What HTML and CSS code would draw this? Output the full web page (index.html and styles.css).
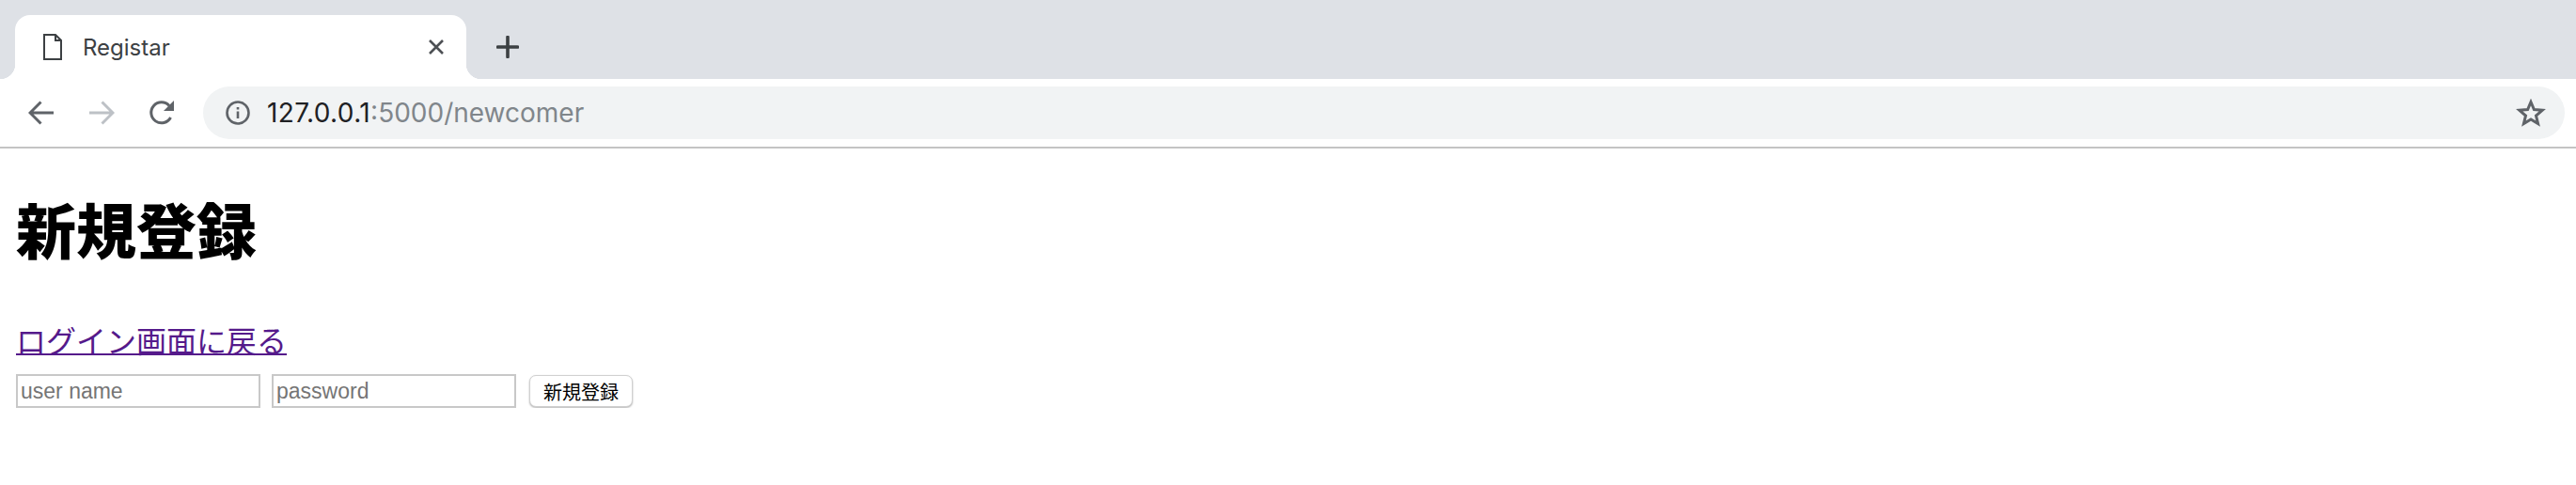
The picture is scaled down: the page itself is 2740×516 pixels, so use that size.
FILE: index.html
```html
<!DOCTYPE html>
<html lang="ja">
<head>
    <meta charset="UTF-8">
    <title>Registar</title>
    <link rel="stylesheet" href="styles.css">
</head>
<body>
    <div class="tabstrip">
        <div class="tab">
            <svg class="tab-icon" width="20" height="28" viewBox="0 0 20 28"><path d="M1 1H13L19 7V27H1Z M13 1V7H19" fill="none" stroke="#3c4043" stroke-width="2"/></svg>
            <span class="tab-title">Registar</span>
            <svg class="tab-close" width="18" height="18" viewBox="0 0 18 18"><path d="M2 2L16 16M16 2L2 16" stroke="#4d5054" stroke-width="2.6"/></svg>
        </div>
        <svg class="new-tab" width="24" height="24" viewBox="0 0 24 24"><path d="M12 1.5V22.5M1.5 12H22.5" stroke="#3c4043" stroke-width="3.6" stroke-linecap="round"/></svg>
    </div>
    <div class="toolbar">
        <svg class="nav-icon" width="28" height="28" viewBox="0 0 28 28"><path d="M27 14H3M13.5 2.5L2 14L13.5 25.5" fill="none" stroke="#5f6368" stroke-width="3"/></svg>
        <svg class="nav-icon" width="28" height="28" viewBox="0 0 28 28"><path d="M1 14H25M14.5 2.5L26 14L14.5 25.5" fill="none" stroke="#bdc1c6" stroke-width="3"/></svg>
        <svg class="nav-icon" width="28" height="28" viewBox="0 0 28 28"><path d="M23.5 19A11 11 0 1 1 22 6.5" fill="none" stroke="#5f6368" stroke-width="3"/><path d="M27 1V12H16Z" fill="#5f6368"/></svg>
        <div class="omnibox">
            <svg class="info-icon" width="26" height="26" viewBox="0 0 26 26"><circle cx="13" cy="13" r="11.5" fill="none" stroke="#5f6368" stroke-width="2.6"/><path d="M13 11.5V19M13 7V9.4" stroke="#5f6368" stroke-width="2.6"/></svg>
            <span class="url"><span class="host">127.0.0.1</span>:5000/newcomer</span>
            <svg class="star-icon" width="32" height="30" viewBox="0 0 32 30"><path d="M16 3.5L19.4 11.6L28.2 12.3L21.5 18L23.6 26.6L16 22L8.4 26.6L10.5 18L3.8 12.3L12.6 11.6Z" fill="none" stroke="#5f6368" stroke-width="3"/></svg>
        </div>
    </div>
    <div class="content">
        <h1>新規登録</h1>
        <a class="back-link" href="#">ログイン画面に戻る</a>
        <form class="newcomer-form">
            <input type="text" placeholder="user name">
            <input type="password" placeholder="password">
            <button type="button">新規登録</button>
        </form>
    </div>
</body>
</html>
```

FILE: styles.css
```css
body {
    margin: 0;
    background: #fff;
    color: #000;
    font-family: "Liberation Sans", "Noto Sans CJK JP", sans-serif;
}

.tabstrip {
    height: 84px;
    background: #dee1e6;
    display: flex;
    align-items: flex-end;
    padding-left: 16px;
    box-sizing: border-box;
}

.tab {
    position: relative;
    width: 480px;
    height: 68px;
    box-sizing: border-box;
    padding: 0 23px 0 30px;
    background: #fff;
    border-radius: 16px 16px 0 0;
    display: flex;
    align-items: center;
}

.tab::before,
.tab::after {
    content: "";
    position: absolute;
    bottom: 0;
    width: 16px;
    height: 16px;
}

.tab::before {
    left: -16px;
    background: radial-gradient(circle at 0 0, #dee1e6 16px, #fff 16.5px);
}

.tab::after {
    right: -16px;
    background: radial-gradient(circle at 100% 0, #dee1e6 16px, #fff 16.5px);
}

.tab-title {
    margin-left: 22px;
    flex: 1;
    font-family: Inter, sans-serif;
    font-size: 24px;
    color: #3c4043;
}

.new-tab {
    margin: 0 0 22px 32px;
}

.toolbar {
    height: 72px;
    border-bottom: 2px solid #c4c4c4;
    display: flex;
    align-items: center;
    padding: 0 12px 0 30px;
    gap: 36px;
}

.omnibox {
    flex: 1;
    height: 56px;
    margin-left: -6px;
    padding: 0 20px 0 24px;
    border-radius: 28px;
    background: #f1f3f4;
    display: flex;
    align-items: center;
}

.url {
    margin-left: 18px;
    flex: 1;
    font-family: Inter, sans-serif;
    font-size: 28px;
    color: #80868b;
}

.host {
    color: #202124;
    letter-spacing: 0.4px;
}

.content {
    padding: 0 17px;
}

h1 {
    margin: 0;
    padding-top: 53px;
    font-size: 64px;
    line-height: 74px;
    font-weight: 900;
}

.back-link {
    display: block;
    width: max-content;
    margin-top: 61px;
    font-size: 32px;
    line-height: 37px;
    color: #551a8b;
    text-decoration-thickness: 2px;
}

.newcomer-form {
    margin-top: 15px;
    display: flex;
    align-items: center;
}

input {
    width: 260px;
    height: 36px;
    box-sizing: border-box;
    margin-right: 12px;
    padding: 0 3px;
    border: 2px solid #c8c8c8;
    font-family: "Liberation Sans", sans-serif;
    font-size: 23px;
}

input::placeholder {
    color: #757575;
}

button {
    width: 110px;
    height: 34px;
    margin-left: 2px;
    padding: 0;
    background: #fff;
    border: 1px solid #d0d0d0;
    border-radius: 7px;
    box-shadow: 0 1px 2px rgba(0, 0, 0, 0.3);
    font-family: "Noto Sans CJK JP", sans-serif;
    font-size: 20px;
    color: #000;
}
```
